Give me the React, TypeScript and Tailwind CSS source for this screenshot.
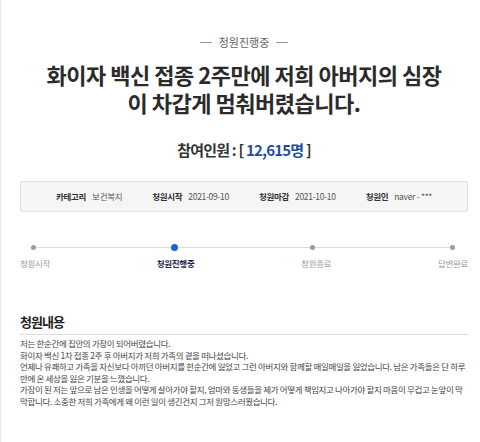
const font = { fontFamily: '"Noto Sans CJK KR", "Noto Sans", sans-serif' };

const info = [
  { label: '카테고리', value: '보건복지' },
  { label: '청원시작', value: '2021-09-10' },
  { label: '청원마감', value: '2021-10-10' },
  { label: '청원인', value: 'naver - ***' },
];

const steps = ['청원시작', '청원진행중', '청원종료', '답변완료'];
const activeStep = 1;

const paragraphs = [
  '저는 한순간에 집안의 가장이 되어버렸습니다.',
  '화이자 백신 1차 접종 2주 후 아버지가 저희 가족의 곁을 떠나셨습니다.',
  '언제나 유쾌하고 가족을 자신보다 아끼던 아버지를 한순간에 잃었고 그런 아버지와 함께할 매일매일을 잃었습니다. 남은 가족들은 단 하루만에 온 세상을 잃은 기분을 느꼈습니다.',
  '가장이 된 저는 앞으로 남은 인생을 어떻게 살아가야 할지, 엄마와 동생들을 제가 어떻게 책임지고 나아가야 할지 마음이 무겁고 눈앞이 막막합니다. 소중한 저희 가족에게 왜 이런 일이 생긴건지 그저 원망스러웠습니다.',
];

function StatusLabel() {
  return (
    <div className="flex items-center justify-center gap-[7px]">
      <span className="block h-px w-[12px] bg-[#999]"></span>
      <span className="text-[11px] leading-[16px] text-[#666]">청원진행중</span>
      <span className="block h-px w-[12px] bg-[#999]"></span>
    </div>
  );
}

function InfoBox() {
  return (
    <div className="mt-[21px] flex h-[31px] items-center justify-center gap-[30px] rounded-[2px] border border-[#e3e3e3] bg-[#f5f5f5] text-[8.5px] tracking-[-0.3px]">
      {info.map((item) => (
        <div key={item.label} className="flex items-center gap-[6px]">
          <span className="font-bold text-[#333]">{item.label}</span>
          <span className="text-[#555]">{item.value}</span>
        </div>
      ))}
    </div>
  );
}

function Progress() {
  return (
    <div className="mt-[31px]">
      <div className="ml-[11px] mr-[13px] flex h-[8px] items-center">
        {steps.map((step, i) => (
          <div key={step} className={`flex items-center ${i < steps.length - 1 ? 'flex-1' : ''}`}>
            {i === activeStep ? (
              <span className="block h-[7px] w-[7px] rounded-full bg-[#1767d3]"></span>
            ) : (
              <span className="block h-[5px] w-[5px] rounded-full bg-[#9a9a9a]"></span>
            )}
            {i < steps.length - 1 && <span className="block h-px flex-1 bg-[#dcdcdc]"></span>}
          </div>
        ))}
      </div>
      <div className="mt-[6px] flex justify-between text-[8.5px] leading-[12px] tracking-[-0.3px]">
        {steps.map((step, i) => (
          <span
            key={step}
            className={i === activeStep ? 'font-bold text-[#1c2a4c]' : 'text-[#9a9a9a]'}
          >
            {step}
          </span>
        ))}
      </div>
    </div>
  );
}

export default function App() {
  return (
    <div className="min-h-[442px] border-l border-[#e6e6e6] bg-white" style={font}>
      <div className="ml-[19px] w-[448px] pt-[34px]">
        <StatusLabel />

        <h1 className="mx-auto mt-[10px] w-[400px] break-all text-center text-[22px] font-bold leading-[28px] tracking-[-0.5px] text-[#2b2b2b]">
          화이자 백신 접종 2주만에 저희 아버지의 심장이 차갑게 멈춰버렸습니다.
        </h1>

        <div className="mt-[24px] text-center text-[15px] font-bold leading-[20px] tracking-[-0.8px] text-[#333]">
          참여인원 : [ <span className="text-[#1d4f9e]">12,615명</span> ]
        </div>

        <InfoBox />
        <Progress />

        <h2 className="mt-[44px] border-b border-[#dddddd] pb-[3px] text-[13px] font-bold leading-[18px] tracking-[-1px] text-[#222]">
          청원내용
        </h2>

        <div className="break-all pt-[3px] text-[8.5px] leading-[11.6px] tracking-[-0.35px] text-[#444]">
          {paragraphs.map((p) => (
            <p key={p}>{p}</p>
          ))}
        </div>
      </div>
    </div>
  );
}
